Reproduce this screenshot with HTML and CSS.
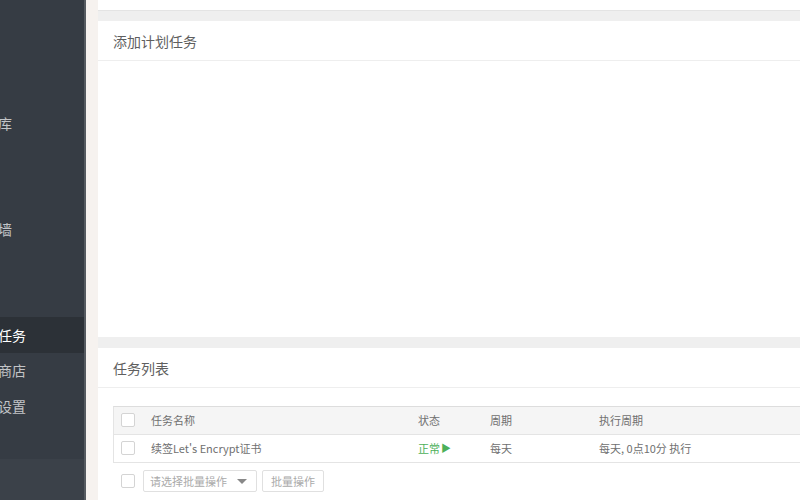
FILE: index.html
```html
<!DOCTYPE html>
<html lang="zh">
<head>
<meta charset="utf-8">
<title>计划任务</title>
<link rel="stylesheet" href="styles.css">
</head>
<body>
<div class="app">
  <aside class="sidebar">
    <ul class="nav">
      <li class="nav-item"><span class="nav-text">首页</span></li>
      <li class="nav-item"><span class="nav-text">网站</span></li>
      <li class="nav-item"><span class="nav-text">FTP</span></li>
      <li class="nav-item"><span class="nav-text">数据库</span></li>
      <li class="nav-item"><span class="nav-text">监控</span></li>
      <li class="nav-item"><span class="nav-text">安全</span></li>
      <li class="nav-item"><span class="nav-text">防火墙</span></li>
      <li class="nav-item"><span class="nav-text">文件</span></li>
      <li class="nav-item"><span class="nav-text">终端</span></li>
      <li class="nav-item active"><span class="nav-text">计划任务</span></li>
      <li class="nav-item"><span class="nav-text">软件商店</span></li>
      <li class="nav-item"><span class="nav-text">面板设置</span></li>
      <li class="nav-item"><span class="nav-text">退出</span></li>
    </ul>
    <div class="sidebar-foot"></div>
  </aside>
  <div class="gutter"></div>
  <main class="content">
    <section class="panel panel-top"></section>
    <section class="panel panel-add">
      <div class="panel-head">添加计划任务</div>
      <div class="panel-body-add"></div>
    </section>
    <section class="panel panel-list">
      <div class="panel-head">任务列表</div>
      <div class="table">
        <div class="row row-head">
          <div class="cell cell-check"><span class="checkbox"></span></div>
          <div class="cell">任务名称</div>
          <div class="cell">状态</div>
          <div class="cell">周期</div>
          <div class="cell">执行周期</div>
        </div>
        <div class="row">
          <div class="cell cell-check"><span class="checkbox"></span></div>
          <div class="cell">续签Let's Encrypt证书</div>
          <div class="cell status-ok">正常<span class="play">▶</span></div>
          <div class="cell">每天</div>
          <div class="cell">每天, 0点10分 执行</div>
        </div>
      </div>
      <div class="batch">
        <span class="checkbox batch-check"></span>
        <div class="select">
          <span class="select-text">请选择批量操作</span>
          <span class="caret"></span>
        </div>
        <div class="btn">批量操作</div>
      </div>
    </section>
  </main>
</div>
</body>
</html>
```

FILE: styles.css
```css
* { box-sizing: border-box; }
html, body {
  margin: 0;
  padding: 0;
  width: 800px;
  height: 500px;
  overflow: hidden;
  font-family: "Noto Sans CJK SC", "Open Sans", sans-serif;
}
.app {
  display: flex;
  height: 500px;
  overflow: hidden;
}
.sidebar {
  width: 86px;
  flex: none;
  background: #363c44;
  border-right: 2px solid #565b61;
  display: flex;
  flex-direction: column;
  overflow: hidden;
}
.nav {
  list-style: none;
  margin: -0.7px 0 0 0;
  padding: 0;
}
.nav-item {
  height: 35.33px;
  display: flex;
  align-items: center;
  white-space: nowrap;
  overflow: hidden;
}
.nav-text {
  margin-left: -30px;
  font-size: 14px;
  color: #c2c4c7;
}
.nav-item.active {
  background: #2c3137;
}
.nav-item.active .nav-text {
  color: #ffffff;
}
.sidebar-foot {
  flex: 1;
  background: #3b4149;
}
.gutter {
  width: 12px;
  flex: none;
  background: #f6f2ef;
}
.content {
  flex: 1;
  background: #efefef;
  display: flex;
  flex-direction: column;
  overflow: hidden;
}
.panel {
  background: #ffffff;
}
.panel-top {
  height: 11px;
  border-bottom: 1px solid #e4e4e4;
  margin-bottom: 10px;
}
.panel-head {
  height: 40px;
  border-bottom: 1px solid #eeeeee;
  padding-left: 15px;
  display: flex;
  align-items: center;
  font-size: 14px;
  color: #5f5f5f;
}
.panel-add {
  margin-bottom: 11px;
}
.panel-body-add {
  height: 276px;
}
.panel-list {
  flex: 1;
}
.table {
  margin: 18px -20px 0 15px;
  border-top: 1px solid #dddddd;
  border-left: 1px solid #e4e4e4;
}
.row {
  display: grid;
  grid-template-columns: 37px 267px 72px 109px 1fr;
  height: 28px;
  border-bottom: 1px solid #e4e4e4;
  font-size: 11px;
  line-height: 14px;
  color: #707070;
  background: #ffffff;
}
.row-head {
  background: #f5f5f5;
}
.cell {
  display: flex;
  align-items: center;
  white-space: nowrap;
  padding-bottom: 1px;
}
.cell-check {
  padding-left: 7px;
}
.checkbox {
  display: inline-block;
  width: 14px;
  height: 14px;
  border: 1px solid #d4d4d4;
  border-radius: 2px;
  background: #ffffff;
}
.status-ok {
  color: #4cb05a;
}
.play {
  font-size: 10px;
  margin-left: 1px;
}
.batch {
  display: flex;
  align-items: center;
  margin: 7px 0 0 23px;
  height: 22px;
}
.batch-check {
  margin-right: 8px;
}
.select {
  width: 114px;
  height: 22px;
  border: 1px solid #e0e0e0;
  border-radius: 2px;
  display: flex;
  align-items: center;
  justify-content: space-between;
  padding: 0 9px 0 6px;
  font-size: 11px;
  color: #aaaaaa;
}
.caret {
  width: 0;
  height: 0;
  border-left: 5px solid transparent;
  border-right: 5px solid transparent;
  border-top: 5px solid #888888;
}
.btn {
  margin-left: 5px;
  width: 62px;
  height: 22px;
  border: 1px solid #e0e0e0;
  border-radius: 2px;
  display: flex;
  align-items: center;
  justify-content: center;
  font-size: 11px;
  color: #aaaaaa;
}
```
